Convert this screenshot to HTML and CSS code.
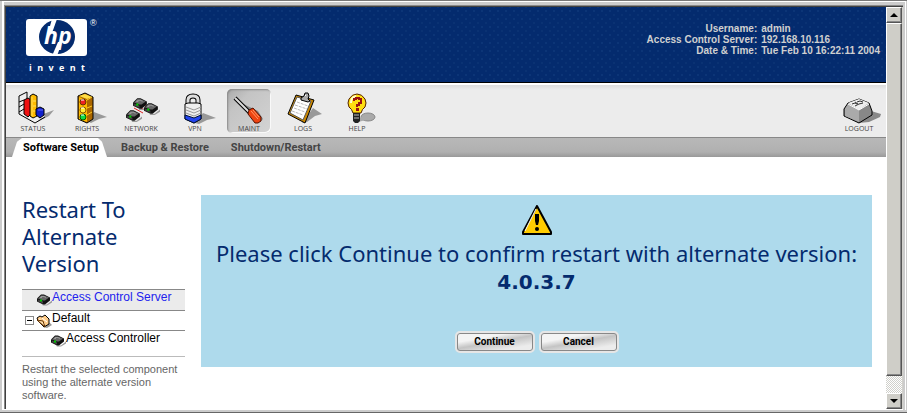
FILE: index.html
```html
<!DOCTYPE html>
<html lang="en">
<head>
    <meta charset="utf-8">
    <title>Restart To Alternate Version</title>
    <link rel="stylesheet" href="styles.css">
</head>
<body>

<svg class="defs" width="0" height="0" aria-hidden="true">
  <symbol id="device" viewBox="0 0 16 12">
    <path d="M6 11h5l5-4v2l-5 3H7z" fill="#999"/>
    <path d="M1 5 5 1h3l6 3v3l-5 4H7L1 8z" fill="#111"/>
    <path d="M2 5 5 2h3l5 2-4 3H7z" fill="#666"/>
    <path d="M5 3h3l2 1M4 4h2" stroke="#999" fill="none"/>
    <path d="M2 6l5 2v2L2 8z" fill="#444"/>
    <path d="M4 6h2v2H4z" fill="#0c0"/>
  </symbol>
</svg>

<div class="window">
  <div class="page">
    <header class="header">
      <div class="brand">
        <svg class="logo" width="74" height="40" viewBox="0 0 74 40" role="img" aria-label="hp">
          <rect x="0" y="1" width="61" height="37" rx="3" fill="#fff"/>
          <ellipse cx="31" cy="19" rx="18" ry="17" fill="#042b6e"/>
          <path d="M26 1h5l-5 14h-4z" fill="#fff"/>
          <path d="M32 24h4l-5 14h-5z" fill="#fff"/>
          <text class="logo-hp" x="18" y="26">hp</text>
          <text class="logo-reg" x="64" y="8">®</text>
        </svg>
        <div class="invent"><span>i</span><span>n</span><span>v</span><span>e</span><span>n</span><span>t</span></div>
      </div>
      <dl class="session">
        <dt>Username:</dt><dd>admin</dd>
        <dt>Access Control Server:</dt><dd>192.168.10.116</dd>
        <dt>Date &amp; Time:</dt><dd>Tue Feb 10 16:22:11 2004</dd>
      </dl>
    </header>

    <div class="toolbar">
      <button class="tool" type="button">
        <svg width="44" height="35" viewBox="0 0 44 35">
          <path d="M22 31l8-6 13-5-5 6-12 6z" fill="#999"/>
          <path d="M8 6l8-4v17l18 7-10 7L8 25z" fill="#eee"/>
          <path d="M8 6v18l16 9 10-6M8 6l8-4v7M8 12l5-2M8 17l5-3M8 22l5-3" fill="none" stroke="#000"/>
          <path d="M13 10l4-2 3 2v14l-3 3-4-3z" fill="#e11" stroke="#000"/>
          <path d="M19 6l3-2 4 2v20l-4 2-3-2z" fill="#fb0" stroke="#000"/>
          <path d="M21 7v19M22 11h3M22 16h3M22 21h3" stroke="#ffe060"/>
          <path d="M25 19l4-2 4 2v6l-4 3-4-3z" fill="#12c" stroke="#000"/>
          <path d="M27 20h5" stroke="#66f"/>
        </svg>
        <span>STATUS</span>
      </button>
      <button class="tool" type="button">
        <svg width="44" height="35" viewBox="0 0 44 35">
          <path d="M24 32l5-10 13 5-8 2-8 4z" fill="#999"/>
          <path d="M13 6l7-3 8 4v22l-6 4-9-4z" fill="#a60" stroke="#000"/>
          <path d="M14 7l8 3v22l-8-3z" fill="#fb0"/>
          <path d="M14 6l6-2 7 3-5 2z" fill="#fd4"/>
          <path d="M22 10l5-3M22 18l5-2M22 25l5-3" stroke="#fc2"/>
          <circle cx="18" cy="12" r="3" fill="#e22" stroke="#630"/>
          <circle cx="18" cy="20" r="3" fill="#fe3" stroke="#850"/>
          <circle cx="18" cy="27" r="3" fill="#1d4" stroke="#050"/>
          <path d="M16 10h3M16 18h3M16 25h3" stroke="#fff"/>
        </svg>
        <span>RIGHTS</span>
      </button>
      <button class="tool" type="button">
        <svg width="44" height="35" viewBox="0 0 44 35">
          <path d="M18 16l10 5M15 18l9 5M24 14l4 3" stroke="#d22"/>
          <use href="#device" x="13" y="7" width="17" height="13"/>
          <use href="#device" x="24" y="12" width="17" height="13"/>
          <use href="#device" x="6" y="19" width="17" height="13"/>
        </svg>
        <span>NETWORK</span>
      </button>
      <button class="tool" type="button">
        <svg width="44" height="35" viewBox="0 0 44 35">
          <path d="M22 33l8-10 13 5-9 2-8 4z" fill="#999"/>
          <path d="M15 16v-6q0-4 5-4t5 4v6" fill="none" stroke="#000" stroke-width="5"/>
          <path d="M15 16v-6q0-4 5-4t5 4v6" fill="none" stroke="#ddd" stroke-width="3"/>
          <path d="M12 14l3-1h10l3 1v15l-7 4-9-4z" fill="#eee" stroke="#000"/>
          <path d="M13 17l8 3 7-3M13 20l8 3 7-3M13 23l8 3 7-3" fill="none" stroke="#999"/>
          <path d="M12 25l9 3 7-3v4l-7 4-9-4z" fill="#24e" stroke="#013"/>
        </svg>
        <span>VPN</span>
      </button>
      <button class="tool active" type="button">
        <svg width="44" height="35" viewBox="0 0 44 35">
          <path d="M12 12l15 15 6 5 3-3-5-8z" fill="#888"/>
          <path d="M8 8l15 15" stroke="#000" stroke-width="4"/>
          <path d="M8 8l15 15" stroke="#ddd" stroke-width="2"/>
          <path d="M22 20l4-2 8 9v4l-3 2h-3l-7-9z" fill="#e41" stroke="#510"/>
          <path d="M24 21l7 8M26 20l6 7" stroke="#f96"/>
        </svg>
        <span>MAINT</span>
      </button>
      <button class="tool" type="button">
        <svg width="44" height="35" viewBox="0 0 44 35">
          <path d="M21 33l11-15 9 6-7 2-8 6z" fill="#999"/>
          <path d="M15 5l18 5-9 23-17-9z" fill="#c80" stroke="#000"/>
          <path d="M16 7l14 4-8 19-13-7z" fill="#fff" stroke="#555"/>
          <path d="M16 12l11 4M14 15l12 4M13 18l11 4M11 21l11 4" stroke="#bbb" stroke-dasharray="3 1"/>
          <path d="M20 8l3-2 1-3h3l1 3-1 3 2 2-2 1-7-2z" fill="#aaa" stroke="#000"/>
          <path d="M24 5h1v1h-1z" fill="#fff"/>
        </svg>
        <span>LOGS</span>
      </button>
      <button class="tool" type="button">
        <svg width="44" height="35" viewBox="0 0 44 35">
          <ellipse cx="33" cy="27" rx="7" ry="4" fill="#aaa" stroke="#888"/>
          <path d="M22 29l9-4v5l-8 2z" fill="#aaa"/>
          <path d="M18 23q-1-4-4-6-2-4 0-8 3-5 8-5t8 5q2 4 0 8-3 2-4 6z" fill="#fd1" stroke="#520"/>
          <path d="M16 13q0-6 5-7" fill="none" stroke="#ffc" stroke-width="2"/>
          <path d="M18 23h7v8l-2 2h-3l-2-2z" fill="#222"/>
          <path d="M19 25h5M19 28h5" stroke="#bbb"/>
          <path d="M19 11v-2h2v-1h3v1h2v4h-2v2h-2v2" fill="none" stroke="#911" stroke-width="2"/>
          <path d="M21 18h3v3h-3z" fill="#911"/>
        </svg>
        <span>HELP</span>
      </button>
      <button class="tool logout" type="button">
        <svg width="44" height="35" viewBox="0 0 44 35">
          <path d="M22 33l12-12 10 3-1 3-11 5z" fill="#888"/>
          <path d="M7 19l4-6 11-4 10 4 3 8v4l-13 8L7 26z" fill="#888" stroke="#000"/>
          <path d="M11 13l11-4 10 4-10 7z" fill="#eee"/>
          <path d="M8 19l3-5 11 6v12L8 26z" fill="#aaa"/>
          <path d="M11 14l11 6 10-6" fill="none" stroke="#fff"/>
          <path d="M15 14l3-1 2 1M18 16l4-2M20 12l3-1 3 1M22 14l4-1M18 12l3 2" fill="none" stroke="#333"/>
        </svg>
        <span>LOGOUT</span>
      </button>
    </div>

    <nav class="tabs">
      <a class="tab current" href="#">Software Setup</a>
      <a class="tab" href="#">Backup &amp; Restore</a>
      <a class="tab" href="#">Shutdown/Restart</a>
    </nav>

    <div class="content">
      <aside class="sidebar">
        <h1>Restart To Alternate Version</h1>
        <ul class="tree">
          <li class="selected">
            <svg width="16" height="13"><use href="#device" width="16" height="13"/></svg>
            <a href="#">Access Control Server</a>
          </li>
          <li class="group">
            <button class="toggle" type="button" aria-label="Collapse"></button>
            <svg width="16" height="14" viewBox="0 0 16 14">
              <path d="M7 13l7-4 2 2-5 3z" fill="#999"/>
              <path d="M1 4l3-2 2 1 3-2 4 4v5l-5 3-6-6z" fill="#fc8" stroke="#000"/>
              <path d="M3 5l5 4v3M6 4l5 4" fill="none" stroke="#fff"/>
              <path d="M1 6l6 1 2 6z" fill="#fda" stroke="#630"/>
            </svg>
            <span>Default</span>
          </li>
          <li class="child">
            <svg width="16" height="13"><use href="#device" width="16" height="13"/></svg>
            <span>Access Controller</span>
          </li>
        </ul>
        <p class="hint">Restart the selected component using the alternate version software.</p>
      </aside>

      <main class="confirm">
        <svg width="32" height="32" viewBox="0 0 32 32">
          <path d="M16 2 2 28v2h28v-2z" fill="#fc0" stroke="#000" stroke-width="2" stroke-linejoin="round"/>
          <path d="M15 5 4 27" stroke="#fff"/>
          <path d="M14 10h4v7l-1 4h-2l-1-4z" fill="#000"/>
          <circle cx="16" cy="25" r="2" fill="#000"/>
        </svg>
        <p>Please click Continue to confirm restart with alternate version:<br><b>4.0.3.7</b></p>
        <div class="actions">
          <button class="btn" type="button">Continue</button>
          <button class="btn" type="button">Cancel</button>
        </div>
      </main>
    </div>
  </div>

  <div class="scrollbar">
    <button class="arrow" type="button" aria-label="Scroll up"><svg width="8" height="4"><path d="M4 0 0 4h8z"/></svg></button>
    <div class="thumb"></div>
    <div class="track"></div>
    <button class="arrow" type="button" aria-label="Scroll down"><svg width="8" height="4"><path d="M0 0h8L4 4z"/></svg></button>
  </div>
</div>

</body>
</html>
```
FILE: styles.css
```css
* {
    box-sizing: border-box;
}
body {
    margin: 0;
    font-family: "Liberation Sans", Arial, sans-serif;
    font-size: 12px;
    color: #000;
}
button {
    font-family: inherit;
    cursor: pointer;
}
svg {
    display: block;
    flex: none;
}
.defs {
    position: absolute;
}

/* browser frame */
.window {
    display: flex;
    min-height: 100vh;
    padding: 7px 5px 5px 6px;
    background: #d2d1cc;
    box-shadow:
        inset 0 -1px #fff,
        inset 0 -2px #666,
        inset 0 -4px #ccc,
        inset 0 1px #777,
        inset 2px 0 #ccc,
        inset -1px 0 #ccc,
        inset -2px 0 #fff,
        inset 0 2px #fff,
        inset 4px 0 #fff,
        inset 0 5px #ccc,
        inset -4px 0 #ccc,
        inset 0 -5px #fff,
        inset 5px 6px #888,
        inset 6px 7px #404040;
}
.page {
    flex: 1;
    display: flex;
    flex-direction: column;
    background: #fff;
}

/* header */
.header {
    display: flex;
    justify-content: space-between;
    align-items: flex-start;
    height: 76px;
    padding: 11px 6px 0 20px;
    border-bottom: 1px solid #000;
    background-color: #042b6e;
    background-image: radial-gradient(#0c3577 1px, transparent 1px), radial-gradient(#0a3273 1px, transparent 1px);
    background-size: 8px 8px;
    background-position: 0 0, 4px 4px;
}
.logo-hp {
    font: italic bold 23px "Open Sans", sans-serif;
    fill: #fff;
}
.logo-reg {
    font-size: 9px;
    fill: #fff;
}
.invent {
    display: flex;
    justify-content: space-between;
    width: 56px;
    margin: 4px 0 0 3px;
    color: #fff;
    font: bold 9px/12px "Open Sans", sans-serif;
}
.session {
    display: grid;
    grid-template-columns: auto auto;
    column-gap: 4px;
    margin: 5px 0 0;
    color: #d0d0d0;
    font-size: 10px;
    font-weight: bold;
    line-height: 11px;
}
.session dt {
    text-align: right;
}
.session dd {
    margin: 0;
}

/* toolbar */
.toolbar {
    display: flex;
    gap: 10px;
    height: 54px;
    padding: 4px 5px 0;
    border-top: 2px solid #fff;
    background: linear-gradient(#dcdcdc, #ececec 5px);
}
.tool {
    width: 44px;
    height: 44px;
    padding: 0;
    border: 0;
    border-radius: 5px;
    background: none;
    color: #444;
    font: 7px/8px "Open Sans", sans-serif;
    text-align: center;
}
.tool.active {
    background: linear-gradient(135deg, #aaa, #c4c4c4 30%, #d4d4d4);
    box-shadow: inset 1px 1px 2px #888, inset -1px -1px #fff;
}
.tool.logout {
    margin-left: auto;
}

/* tabs */
.tabs {
    display: flex;
    height: 20px;
    padding-left: 6px;
    border-top: 1px solid #888;
    background: linear-gradient(#b8b8b8, #b0b0b0 14px, #999);
}
.tab {
    padding: 0 8px 0 14px;
    color: #444;
    font: bold 11px/20px Roboto, sans-serif;
    text-decoration: none;
}
.tab.current {
    padding-left: 11px;
    color: #000;
    background: #fff;
    clip-path: polygon(0 100%, 5px 20%, 10px 0, calc(100% - 9px) 0, calc(100% - 5px) 20%, 100% 100%);
}

/* content */
.content {
    flex: 1;
    display: flex;
    align-items: flex-start;
    gap: 16px;
    padding: 38px 14px 4px 16px;
}
.sidebar {
    flex: none;
    width: 163px;
}
.sidebar h1 {
    margin: 1px 0 12px;
    padding-right: 40px;
    color: #042b6e;
    font: 22px/27px "Noto Sans", Tahoma, sans-serif;
}
.tree {
    margin: 0;
    padding: 0 0 6px;
    list-style: none;
    border-bottom: 1px solid #bbb;
}
.tree li {
    display: flex;
    height: 20px;
    border-top: 1px solid #888;
    line-height: 15px;
}
.tree svg {
    margin-top: 3px;
}
.tree .selected {
    height: 21px;
    padding-left: 14px;
    background: #ebebeb;
}
.tree .selected a {
    color: #22e;
    text-decoration: none;
}
.tree .group {
    padding-left: 3px;
}
.tree .child {
    padding-left: 28px;
}
.toggle {
    width: 9px;
    height: 9px;
    margin: 5px 2px 0 0;
    padding: 0;
    border: 1px solid #888;
    background: linear-gradient(#000, #000) center / 5px 1px no-repeat #fff;
}
.hint {
    margin: 6px 0 0;
    color: #666;
    font-size: 11px;
    line-height: 13px;
}

.confirm {
    flex: 1;
    display: flex;
    flex-direction: column;
    align-items: center;
    padding: 9px 8px 14px;
    background: #aedaec;
    color: #042b6e;
}
.confirm p {
    margin: 4px 0 0;
    font: 22px/27px "Noto Sans", Tahoma, sans-serif;
    text-align: center;
}
.confirm b {
    font: bold 20px/20px "DejaVu Sans", Verdana, sans-serif;
}
.actions {
    display: flex;
    gap: 4px;
    margin-top: 37px;
}
.btn {
    width: 80px;
    height: 22px;
    padding: 0;
    border: 2px solid #e6e6e6;
    border-radius: 5px;
    background: linear-gradient(170deg, #f4f4f4 30%, #c4c4c4 50%, #ececec 80%);
    box-shadow: inset 0 0 0 1px #888;
    font: bold 10px/16px Roboto, sans-serif;
}

/* scrollbar */
.scrollbar {
    display: flex;
    flex-direction: column;
    width: 16px;
}
.arrow,
.thumb {
    border: 1px solid;
    border-color: #fff #555 #555 #fff;
    background: #cfcec8;
    box-shadow: inset -1px -1px #888;
}
.arrow {
    display: grid;
    place-items: center;
    height: 16px;
    padding: 0;
}
.thumb {
    flex: 1;
}
.track {
    height: 17px;
    background: repeating-conic-gradient(#fff 0 25%, #d0d0cb 0 50%) 0 0 / 2px 2px;
}
```
